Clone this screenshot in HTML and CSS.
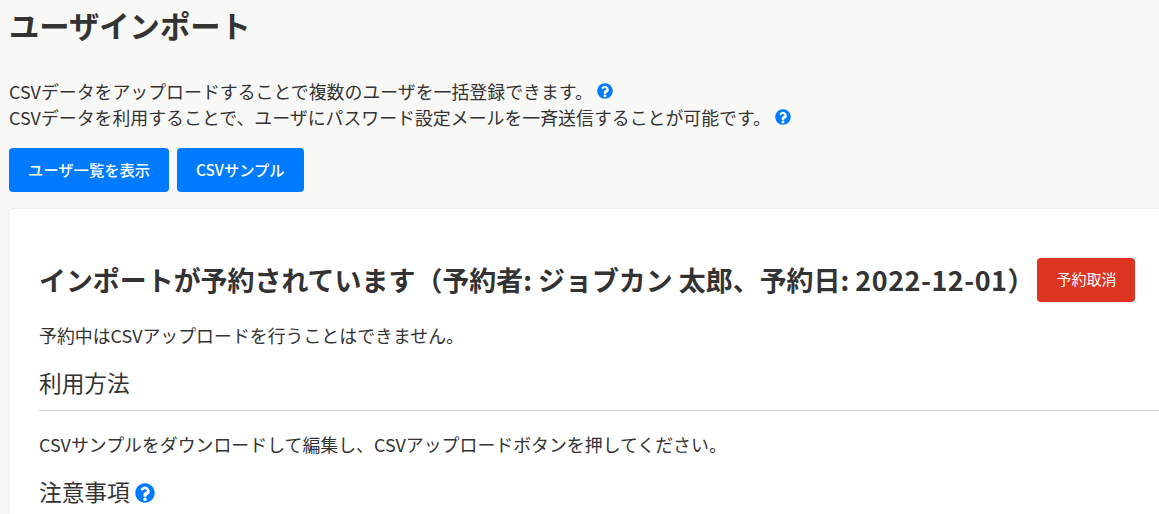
FILE: index.html
```html
<!DOCTYPE html>
<html lang="ja">
<head>
<meta charset="utf-8">
<title>ユーザインポート</title>
<link rel="stylesheet" href="styles.css">
</head>
<body>
<main class="page">
  <h1 class="page-title">ユーザインポート</h1>
  <div class="intro">
    <p>CSVデータをアップロードすることで複数のユーザを一括登録できます。 <svg class="help" viewBox="0 0 512 512"><path d="M504 256c0 137-111 248-248 248S8 393 8 256 119 8 256 8s248 111 248 248zM262.700 90c-54.500 0-89.300 23-116.600 63.800-3.500 5.300-2.400 12.400 2.700 16.300l34.700 26.300c5.200 3.900 12.600 3 16.700-2.100 17.900-22.700 30.100-35.800 57.300-35.800 20.400 0 45.700 13.100 45.700 33 0 15-12.400 22.700-32.600 34-23.600 13.200-54.800 29.700-54.800 70.900V340c0 6.600 5.400 12 12 12h56c6.600 0 12-5.400 12-12v-9.400c0-28.600 83.400-29.700 83.400-107.100C379.200 165.300 318.700 90 262.700 90zM256 368c-25.400 0-46 20.600-46 46s20.600 46 46 46 46-20.600 46-46-20.600-46-46-46z"/></svg></p>
    <p>CSVデータを利用することで、ユーザにパスワード設定メールを一斉送信することが可能です。 <svg class="help" viewBox="0 0 512 512"><path d="M504 256c0 137-111 248-248 248S8 393 8 256 119 8 256 8s248 111 248 248zM262.700 90c-54.500 0-89.300 23-116.600 63.800-3.500 5.300-2.400 12.400 2.700 16.300l34.700 26.300c5.200 3.900 12.600 3 16.700-2.100 17.900-22.700 30.100-35.800 57.300-35.800 20.400 0 45.700 13.100 45.700 33 0 15-12.400 22.700-32.600 34-23.600 13.200-54.800 29.700-54.800 70.900V340c0 6.600 5.400 12 12 12h56c6.600 0 12-5.400 12-12v-9.400c0-28.600 83.400-29.700 83.400-107.100C379.200 165.300 318.700 90 262.700 90zM256 368c-25.400 0-46 20.600-46 46s20.600 46 46 46 46-20.600 46-46-20.600-46-46-46z"/></svg></p>
  </div>
  <div class="actions">
    <a class="btn btn-primary">ユーザ一覧を表示</a>
    <a class="btn btn-primary">CSVサンプル</a>
  </div>
  <section class="card">
    <div class="notice-row">
      <h2 class="notice-title">インポートが予約されています <span class="notice-meta">（予約者: ジョブカン 太郎、予約日: <span class="date">2022-12-01</span>）</span></h2>
      <a class="btn btn-danger">予約取消</a>
    </div>
    <p class="text notice-text">予約中はCSVアップロードを行うことはできません。</p>
    <h3 class="section-title ruled">利用方法</h3>
    <p class="text usage-text">CSVサンプルをダウンロードして編集し、CSVアップロードボタンを押してください。</p>
    <h3 class="section-title">注意事項 <svg class="help help-lg" viewBox="0 0 512 512"><path d="M504 256c0 137-111 248-248 248S8 393 8 256 119 8 256 8s248 111 248 248zM262.700 90c-54.500 0-89.300 23-116.600 63.800-3.500 5.300-2.400 12.400 2.700 16.300l34.700 26.300c5.200 3.900 12.600 3 16.700-2.100 17.900-22.700 30.100-35.800 57.300-35.800 20.400 0 45.700 13.100 45.700 33 0 15-12.400 22.700-32.600 34-23.600 13.200-54.800 29.700-54.800 70.900V340c0 6.600 5.400 12 12 12h56c6.600 0 12-5.400 12-12v-9.400c0-28.600 83.400-29.700 83.400-107.100C379.200 165.300 318.700 90 262.700 90zM256 368c-25.400 0-46 20.600-46 46s20.600 46 46 46 46-20.600 46-46-20.600-46-46-46z"/></svg></h3>
  </section>
</main>
</body>
</html>
```
FILE: styles.css
```css
* { box-sizing: border-box; }
html, body { height: 100%; overflow: hidden; }
body {
  margin: 0;
  background: #f8f8f7;
  color: #333;
  font-family: "Noto Sans CJK JP", "Noto Sans", sans-serif;
  font-size: 17.9px;
  line-height: 1.6;
}
.page { display: flex; flex-direction: column; height: 100%; padding-left: 9px; }
.page-title { margin: 0; padding-top: 3px; padding-bottom: 2px; font-size: 30.3px; font-weight: 700; line-height: 44px; }
.intro { margin-top: 29px; }
.intro p { margin: 0; line-height: 26px; height: 26px; }
.help { width: 16px; height: 16px; fill: #007bff; vertical-align: 0; }
.help-lg { width: 20px; height: 20px; margin-left: .5px; vertical-align: -2px; }
.actions { display: flex; gap: 8px; margin-top: 18px; }
.btn {
  display: inline-flex;
  align-items: center;
  justify-content: center;
  height: 44px;
  padding: 0 19px 2px;
  border-radius: 4px;
  color: #fff;
  font-size: 15.3px;
  white-space: nowrap;
}
.btn-primary { background: #007bff; font-weight: 500; }
.btn-danger { background: #dc3522; flex: none; font-size: 15px; padding-bottom: 3px; }
.card {
  flex: 1;
  margin-top: 17px;
  background: #fff;
  border-radius: 4px 0 0 0;
  box-shadow: 0 0 2px rgba(0,0,0,.12);
  padding: 49px 0 0 30px;
}
.notice-row { display: flex; align-items: center; gap: 3px; }
.notice-title { margin: 0; font-size: 26.95px; font-weight: 700; line-height: 44px; white-space: nowrap; }
.notice-meta { margin-left: -6px; }
.date { letter-spacing: .5px; }
.text { margin: 0; line-height: 26px; }
.notice-text { margin-top: 20px; }
.section-title { margin: 0; font-size: 22.700px; font-weight: 400; line-height: 30px; }
.ruled { margin-top: 20px; padding-bottom: 12px; border-bottom: 1px solid #ccc; }
.usage-text { margin-top: 20px; }
.section-title:not(.ruled) { margin-top: 20px; }
```
